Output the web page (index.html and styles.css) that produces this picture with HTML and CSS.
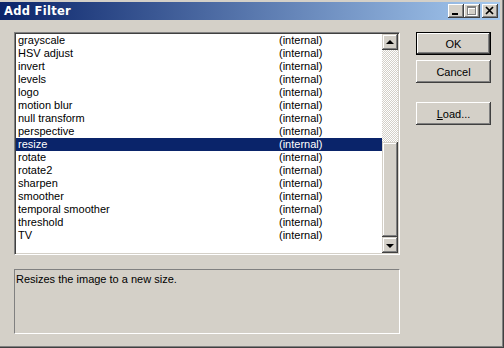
FILE: index.html
```html
<!DOCTYPE html>
<html>
<head>
<meta charset="utf-8">
<link rel="stylesheet" href="styles.css">
</head>
<body>
<div class="window">
  <div class="titlebar">
    <span class="title">Add Filter</span>
    <div class="tbtns">
      <div class="tbtn"><svg width="16" height="14" viewBox="0 0 16 14"><rect x="4" y="9" width="6" height="2" fill="#000"/></svg></div>
      <div class="tbtn"><svg width="16" height="14" viewBox="0 0 16 14" shape-rendering="crispEdges"><g fill="none" stroke="#fff"><rect x="4.5" y="3.5" width="8" height="8"/><line x1="4" y1="4.5" x2="13" y2="4.5"/></g><g fill="none" stroke="#808080"><rect x="3.5" y="2.5" width="8" height="8"/><line x1="3" y1="3.5" x2="12" y2="3.5"/></g></svg></div>
      <div class="tbtn close"><svg width="16" height="14" viewBox="0 0 16 14"><path d="M4 3 L11 10 M11 3 L4 10" stroke="#000" stroke-width="1.7" fill="none"/></svg></div>
    </div>
  </div>
  <div class="body">
    <div class="left">
      <div class="listbox">
        <div class="list">
          <div class="row"><span class="c1">grayscale</span><span>(internal)</span></div>
          <div class="row"><span class="c1">HSV adjust</span><span>(internal)</span></div>
          <div class="row"><span class="c1">invert</span><span>(internal)</span></div>
          <div class="row"><span class="c1">levels</span><span>(internal)</span></div>
          <div class="row"><span class="c1">logo</span><span>(internal)</span></div>
          <div class="row"><span class="c1">motion blur</span><span>(internal)</span></div>
          <div class="row"><span class="c1">null transform</span><span>(internal)</span></div>
          <div class="row"><span class="c1">perspective</span><span>(internal)</span></div>
          <div class="row sel"><span class="c1">resize</span><span>(internal)</span></div>
          <div class="row"><span class="c1">rotate</span><span>(internal)</span></div>
          <div class="row"><span class="c1">rotate2</span><span>(internal)</span></div>
          <div class="row"><span class="c1">sharpen</span><span>(internal)</span></div>
          <div class="row"><span class="c1">smoother</span><span>(internal)</span></div>
          <div class="row"><span class="c1">temporal smoother</span><span>(internal)</span></div>
          <div class="row"><span class="c1">threshold</span><span>(internal)</span></div>
          <div class="row"><span class="c1">TV</span><span>(internal)</span></div>
        </div>
        <div class="scrollbar">
          <div class="sbtn"><span class="arrow up"></span></div>
          <div class="track"><div class="thumb"></div></div>
          <div class="sbtn"><span class="arrow down"></span></div>
        </div>
      </div>
      <div class="desc">Resizes the image to a new size.</div>
    </div>
    <div class="right">
      <div class="btn default"><span>OK</span></div>
      <div class="btn cancel"><span>Cancel</span></div>
      <div class="btn load"><span><u>L</u>oad...</span></div>
    </div>
  </div>
</div>
</body>
</html>
```
FILE: styles.css
```css
body {
  margin: 0;
}
.window {
  width: 504px;
  height: 348px;
  box-sizing: border-box;
  background: #d4d0c8;
  padding: 2px 4px 0 0;
  box-shadow: inset -1px -1px #404040, inset -2px -2px #808080;
  font-family: "Liberation Sans", Arial, sans-serif;
  font-size: 11px;
  color: #000;
}
.titlebar {
  height: 18px;
  background: linear-gradient(to right, #0a246a, #a6caf0);
  display: flex;
  align-items: center;
  justify-content: space-between;
  padding: 0 2px 0 4px;
}
.title {
  color: #fff;
  font-family: "DejaVu Sans", Verdana, sans-serif;
  font-weight: bold;
  font-size: 11.5px;
  letter-spacing: 0.3px;
}
.tbtns {
  display: flex;
}
.tbtn {
  width: 16px;
  height: 14px;
  background: #d4d0c8;
  box-shadow: inset -1px -1px #404040, inset 1px 1px #fff, inset -2px -2px #808080;
}
.tbtn svg {
  display: block;
}
.tbtn.close {
  margin-left: 2px;
}
.body {
  display: flex;
  padding: 12px 0 0 14px;
  gap: 16px;
}
.left {
  width: 386px;
  display: flex;
  flex-direction: column;
  gap: 14px;
}
.listbox {
  height: 223px;
  box-sizing: border-box;
  background: #fff;
  border-top: 1px solid #808080;
  border-left: 1px solid #808080;
  border-bottom: 1px solid #fff;
  border-right: 1px solid #fff;
  display: flex;
  padding: 1px;
  box-shadow: inset 1px 1px #404040, inset -1px -1px #d4d0c8;
}
.list {
  flex: 1;
  background: #fff;
}
.row {
  display: flex;
  height: 13px;
  line-height: 13px;
  white-space: nowrap;
}
.row .c1 {
  width: 261px;
  padding-left: 2px;
}
.row.sel {
  background: #0a246a;
  color: #fff;
}
.scrollbar {
  width: 16px;
  display: flex;
  flex-direction: column;
}
.sbtn, .thumb {
  background: #d4d0c8;
  box-shadow: inset -1px -1px #404040, inset 1px 1px #d4d0c8, inset -2px -2px #808080, inset 2px 2px #fff;
}
.sbtn {
  height: 16px;
  display: flex;
  align-items: center;
  justify-content: center;
}
.arrow {
  width: 0;
  height: 0;
  border-left: 4px solid transparent;
  border-right: 4px solid transparent;
}
.arrow.up {
  border-bottom: 4px solid #000;
  margin-bottom: 1px;
}
.arrow.down {
  border-top: 4px solid #000;
  margin-top: 1px;
}
.track {
  flex: 1;
  display: flex;
  flex-direction: column;
  justify-content: flex-end;
  background: repeating-conic-gradient(#d4d0c8 0 25%, #fff 0 50%) 0 0 / 2px 2px;
}
.thumb {
  height: 95px;
}
.desc {
  height: 65px;
  box-sizing: border-box;
  border-top: 1px solid #808080;
  border-left: 1px solid #808080;
  border-bottom: 1px solid #fff;
  border-right: 1px solid #fff;
  padding: 3px 0 0 1px;
  line-height: 13px;
}
.right {
  width: 75px;
  display: flex;
  flex-direction: column;
}
.btn {
  height: 23px;
  box-sizing: border-box;
  display: flex;
  align-items: center;
  justify-content: center;
  background: #d4d0c8;
  box-shadow: inset -1px -1px #404040, inset 1px 1px #fff, inset -2px -2px #808080, inset 2px 2px #d4d0c8;
}
.btn.default {
  border: 1px solid #000;
}
.btn.cancel {
  margin-top: 5px;
}
.btn.load {
  margin-top: 19px;
}
```
